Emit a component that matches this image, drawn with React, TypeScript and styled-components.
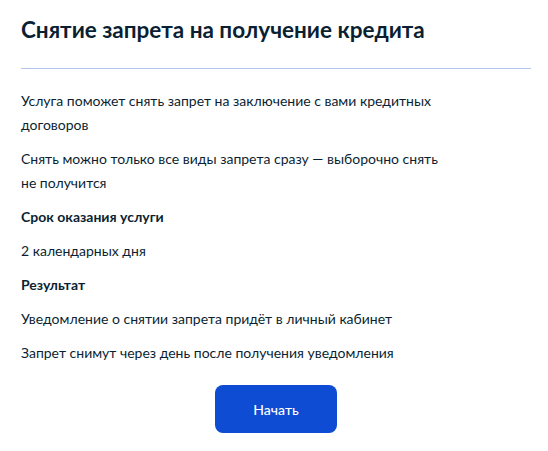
import React from "react";
import styled, { createGlobalStyle } from "styled-components";

const Global = createGlobalStyle`
  html, body { margin: 0; padding: 0; background: #ffffff; }
  body { font-family: Lato, "Noto Sans", sans-serif; color: #0b1f33; }
  * { box-sizing: border-box; }
`;

const Card = styled.div`
  width: 548px;
  padding: 15px 17px 0 21px;
  display: flex;
  flex-direction: column;
`;

const Title = styled.h1`
  margin: 0;
  font-size: 22.5px;
  line-height: 30px;
  font-weight: 700;
  color: #0b1f33;
`;

const Divider = styled.hr`
  margin: 23px 0 20px;
  border: 0;
  height: 1px;
  background: #b4c5ee;
`;

const Body = styled.div`
  display: flex;
  flex-direction: column;
  gap: 10px;
`;

const Text = styled.p<{ $bold?: boolean }>`
  margin: 0;
  max-width: 442px;
  font-size: 14px;
  line-height: 24px;
  font-weight: ${(p) => (p.$bold ? 700 : 400)};
  color: #0b1f33;
`;

const Actions = styled.div`
  display: flex;
  justify-content: center;
  padding-top: 20px;
`;

const Button = styled.button`
  width: 122px;
  height: 48px;
  border: 0;
  border-radius: 8px;
  background: #0d4cd3;
  color: #ffffff;
  font-family: Lato, "Noto Sans", sans-serif;
  font-size: 14px;
  font-weight: 500;
  cursor: pointer;
`;

export default function App() {
  return (
    <>
      <Global />
      <Card>
        <Title>Снятие запрета на получение кредита</Title>
        <Divider />
        <Body>
          <Text>Услуга поможет снять запрет на заключение с вами кредитных договоров</Text>
          <Text>{"Снять можно только все виды запрета сразу — выборочно снять не\u00a0получится"}</Text>
          <Text $bold>Срок оказания услуги</Text>
          <Text>2 календарных дня</Text>
          <Text $bold>Результат</Text>
          <Text>Уведомление о снятии запрета придёт в личный кабинет</Text>
          <Text>Запрет снимут через день после получения уведомления</Text>
        </Body>
        <Actions>
          <Button>Начать</Button>
        </Actions>
      </Card>
    </>
  );
}
